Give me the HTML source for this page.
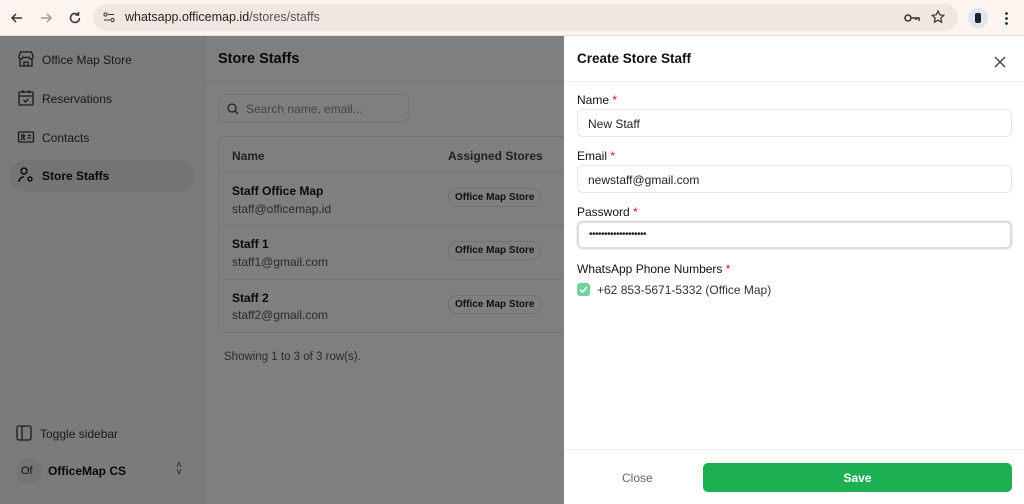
<!DOCTYPE html>
<html><head><meta charset="utf-8"><style>
*{box-sizing:border-box;margin:0;padding:0}
body{width:1024px;height:504px;overflow:hidden;font-family:"Liberation Sans",sans-serif;background:#fff;position:relative;color:#111}
.chrome{position:absolute;left:0;top:0;width:1024px;height:36px;background:#fcf4ef;border-bottom:1px solid #eadfd8}
.url{position:absolute;left:93px;top:4px;width:865px;height:27px;border-radius:14px;background:#f1e7e1}
.url span{position:absolute;left:32px;top:6px;font-size:12.5px;color:#222}
.app{position:absolute;left:0;top:36px;width:1024px;height:468px}
.side{position:absolute;left:0;top:0;width:205px;height:468px;background:#f6f6f6;border-right:1px solid #e5e5e5}
.item{position:absolute;left:10px;width:185px;height:32px;border-radius:16px;font-size:12px;color:#333;padding:9px 0 0 32px}
.item svg{position:absolute;left:7px;top:6px}
.main{position:absolute;left:205px;top:0;right:0;height:468px;background:#fff}
.ov{position:absolute;left:0;top:36px;width:1024px;height:468px;background:rgba(0,0,0,.5)}
.panel{position:absolute;left:564px;top:36px;width:460px;height:468px;background:#fff}
.lbl{position:absolute;left:13px;font-size:12px;color:#111}
.lbl b{color:#e11;font-weight:normal}
.inp{position:absolute;left:13px;width:435px;height:28px;border:1px solid #e6e6e6;border-radius:6px;font-size:12px;padding:7px 0 0 10px;color:#222}
</style></head><body>
<div class="chrome">
<svg style="position:absolute;left:10px;top:11px" width="14" height="14" viewBox="0 0 14 14"><path d="M12 7H2M6 3L2 7l4 4" stroke="#333" stroke-width="1.5" fill="none"/></svg>
<svg style="position:absolute;left:39px;top:11px" width="14" height="14" viewBox="0 0 14 14"><path d="M2 7h10M8 3l4 4-4 4" stroke="#999" stroke-width="1.5" fill="none"/></svg>
<svg style="position:absolute;left:68px;top:11px" width="14" height="14" viewBox="0 0 14 14"><path d="M11.5 7A4.5 4.5 0 1 1 10 3.6M10.5 1v3h-3" stroke="#333" stroke-width="1.5" fill="none"/></svg>
<div class="url"><svg style="position:absolute;left:10px;top:8px" width="12" height="11" viewBox="0 0 12 11"><circle cx="2.5" cy="2.5" r="1.6" fill="none" stroke="#333"/><path d="M5 2.5h6M1 8h6" stroke="#333"/><circle cx="9.5" cy="8" r="1.6" fill="none" stroke="#333"/></svg><span>whatsapp.officemap.id<span style="position:static;color:#555">/stores/staffs</span></span>
<svg style="position:absolute;left:811px;top:8px" width="16" height="12" viewBox="0 0 16 12"><circle cx="4" cy="6" r="3" fill="none" stroke="#333" stroke-width="1.5"/><path d="M7 6h8v3M12 6v2" stroke="#333" stroke-width="1.5" fill="none"/></svg>
<svg style="position:absolute;left:838px;top:6px" width="14" height="14" viewBox="0 0 14 14"><path d="M7 1l1.8 3.8 4 .5-3 2.8.8 4L7 10.2 3.4 12.1l.8-4-3-2.8 4-.5z" fill="none" stroke="#333" stroke-width="1.2"/></svg></div>
<div style="position:absolute;left:968px;top:8px;width:20px;height:20px;border-radius:10px;background:#dfe6f2"><div style="position:absolute;left:7px;top:5px;width:6px;height:10px;background:#222;border-radius:2px"></div></div>
<div style="position:absolute;left:1005px;top:11px;width:3px;height:14px;background:radial-gradient(circle,#333 1.3px,transparent 1.5px) 0 0/3px 5px"></div>
</div>
<div class="app">
<div class="side">
<div class="item" style="top:8px"><svg width="18" height="18" viewBox="0 0 18 18" fill="none" stroke="#333" stroke-width="1.3"><path d="M2 6l1.5-4h11L16 6v1a2 2 0 0 1-4 0 2 2 0 0 1-3 0 2 2 0 0 1-3 0 2 2 0 0 1-4 0zM3 8v8h12V8M7 16v-4h4v4"/></svg>Office Map Store</div>
<div class="item" style="top:47px"><svg width="18" height="18" viewBox="0 0 18 18" fill="none" stroke="#333" stroke-width="1.3"><rect x="2" y="3" width="14" height="13" rx="1"/><path d="M2 7h14M6 1v3M12 1v3M6.5 11l2 2 3-3"/></svg>Reservations</div>
<div class="item" style="top:86px"><svg width="18" height="18" viewBox="0 0 18 18" fill="none" stroke="#333" stroke-width="1.3"><rect x="1.5" y="4" width="15" height="10" rx="1"/><circle cx="6" cy="8" r="1.3"/><path d="M4 12c0-1.5 4-1.5 4 0M10.5 7.5h3.5M10.5 10h3.5"/></svg>Contacts</div>
<div class="item" style="top:124px;background:#e8e8e8;color:#111;font-weight:bold"><svg width="18" height="18" viewBox="0 0 18 18" fill="none" stroke="#111" stroke-width="1.4"><circle cx="7" cy="5" r="3"/><path d="M2 16c0-3 2-5 5-5"/><circle cx="13" cy="13" r="2"/></svg>Store Staffs</div>
<div class="item" style="top:382px;left:8px;font-size:12px"><svg width="18" height="18" viewBox="0 0 18 18" fill="none" stroke="#333" stroke-width="1.3"><rect x="2" y="2" width="14" height="14" rx="2"/><path d="M7 2v14"/></svg>Toggle sidebar</div>
<div style="position:absolute;left:16px;top:422px;width:26px;height:26px;border-radius:13px;background:#e8e8e8;font-size:11px;padding:7px 0 0 5px;color:#222">Of</div>
<div style="position:absolute;left:48px;top:428px;font-size:12px;font-weight:bold;color:#111">OfficeMap CS</div>
<div style="position:absolute;left:176px;top:426px;font-size:10px;color:#333;line-height:7px">˄<br>˅</div>
</div>
<div class="main">
<div style="position:absolute;left:13px;top:15px;font-size:14.5px;font-weight:bold;color:#111">Store Staffs</div>
<div style="position:absolute;left:0;top:45px;right:0;border-top:1px solid #eee"></div>
<div style="position:absolute;left:13px;top:58px;width:191px;height:29px;border:1px solid #e6e6e6;border-radius:7px;font-size:12px;color:#888;padding:7px 0 0 27px"><svg style="position:absolute;left:8px;top:8px" width="12" height="12" viewBox="0 0 12 12" fill="none" stroke="#444" stroke-width="1.3"><circle cx="5" cy="5" r="4"/><path d="M8 8l3 3"/></svg>Search name, email...</div>
<div style="position:absolute;left:13px;top:100px;width:400px;height:197px;border:1px solid #e6e6e6;border-radius:8px;font-size:12px">
<div style="position:absolute;left:13px;top:12px;color:#444;font-weight:bold">Name</div>
<div style="position:absolute;left:229px;top:12px;color:#444;font-weight:bold">Assigned Stores</div>
<div style="position:absolute;left:0;right:0;top:35px;border-top:1px solid #eee"></div>
<div style="position:absolute;left:13px;top:47px;font-weight:bold;color:#111">Staff Office Map</div><div style="position:absolute;left:13px;top:65px;color:#555">staff@officemap.id</div>
<div style="position:absolute;left:229px;top:51px;border:1px solid #e3e3e3;border-radius:9px;padding:3px 6px;font-size:10px;font-weight:bold;color:#222">Office Map Store</div>
<div style="position:absolute;left:0;right:0;top:88px;border-top:1px solid #eee"></div>
<div style="position:absolute;left:13px;top:100px;font-weight:bold;color:#111">Staff 1</div><div style="position:absolute;left:13px;top:118px;color:#555">staff1@gmail.com</div>
<div style="position:absolute;left:229px;top:104px;border:1px solid #e3e3e3;border-radius:9px;padding:3px 6px;font-size:10px;font-weight:bold;color:#222">Office Map Store</div>
<div style="position:absolute;left:0;right:0;top:142px;border-top:1px solid #eee"></div>
<div style="position:absolute;left:13px;top:154px;font-weight:bold;color:#111">Staff 2</div><div style="position:absolute;left:13px;top:171px;color:#555">staff2@gmail.com</div>
<div style="position:absolute;left:229px;top:158px;border:1px solid #e3e3e3;border-radius:9px;padding:3px 6px;font-size:10px;font-weight:bold;color:#222">Office Map Store</div>
</div>
<div style="position:absolute;left:19px;top:315px;font-size:11.5px;color:#555">Showing 1 to 3 of 3 row(s).</div>
</div>
</div>
<div class="ov"></div>
<div class="panel">
<div style="position:absolute;left:13px;top:15px;font-size:13.5px;font-weight:bold;color:#111">Create Store Staff</div>
<svg style="position:absolute;left:430px;top:20px" width="12" height="12" viewBox="0 0 12 12"><path d="M1 1l10 10M11 1L1 11" stroke="#444" stroke-width="1.4"/></svg>
<div style="position:absolute;left:0;right:0;top:45px;border-top:1px solid #eee"></div>
<div class="lbl" style="top:57px">Name <b>*</b></div>
<div class="inp" style="top:73px">New Staff</div>
<div class="lbl" style="top:113px">Email <b>*</b></div>
<div class="inp" style="top:129px">newstaff@gmail.com</div>
<div class="lbl" style="top:169px">Password <b>*</b></div>
<div class="inp" style="top:185px;border:2px solid #ddd;box-shadow:0 0 0 1px #eee;font-size:10px;padding-top:6px;letter-spacing:-.5px">•••••••••••••••••••</div>
<div class="lbl" style="top:226px">WhatsApp Phone Numbers <b>*</b></div>
<div style="position:absolute;left:13px;top:247px;width:13px;height:13px;border-radius:3px;background:#6dd59a"><svg width="13" height="13" viewBox="0 0 13 13"><path d="M3 6.5l2.5 2.5 4.5-5" stroke="#fff" stroke-width="1.5" fill="none"/></svg></div>
<div style="position:absolute;left:33px;top:247px;font-size:12px;color:#333">+62 853-5671-5332 (Office Map)</div>
<div style="position:absolute;left:0;right:0;top:413px;border-top:1px solid #eee"></div>
<div style="position:absolute;left:58px;top:435px;font-size:12px;color:#666">Close</div>
<div style="position:absolute;left:139px;top:427px;width:309px;height:29px;border-radius:5px;background:#1db052;color:#fff;font-size:12px;font-weight:bold;text-align:center;padding-top:8px">Save</div>
</div>
</body></html>
